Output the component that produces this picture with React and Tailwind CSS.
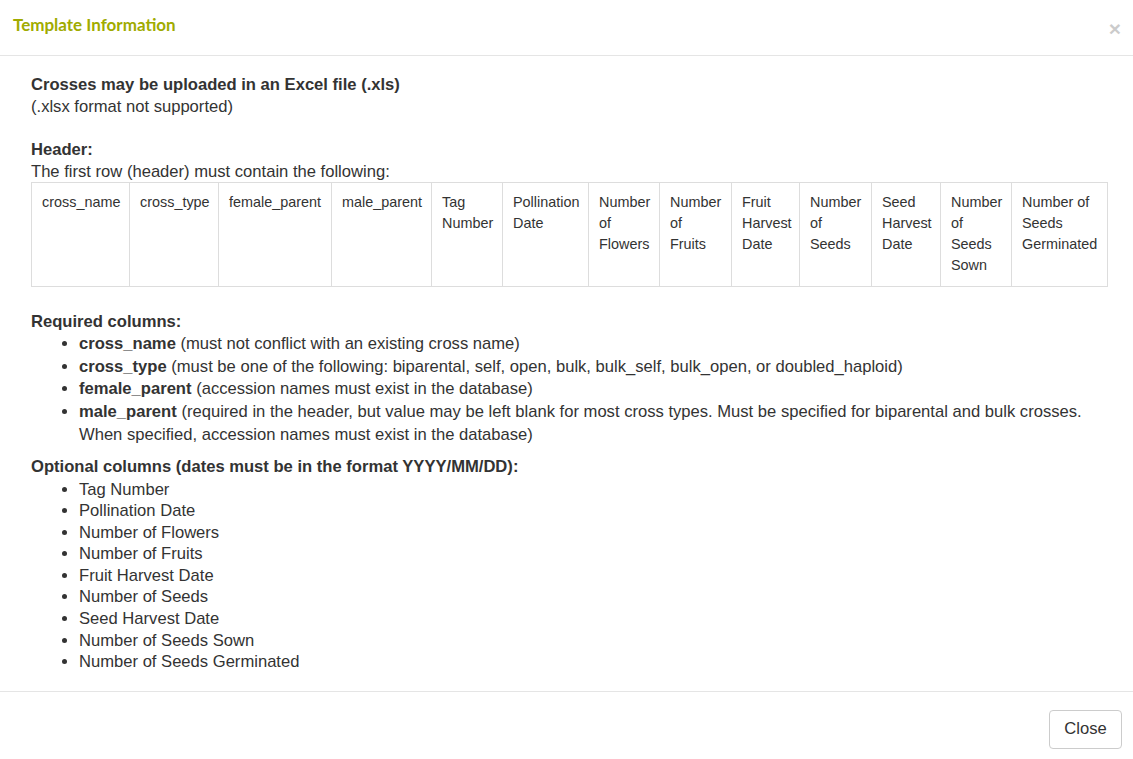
import React from "react";

const columns = [
  ["cross_name", "w-[98px]"],
  ["cross_type", "w-[89px]"],
  ["female_parent", "w-[113px]"],
  ["male_parent", "w-[100px]"],
  ["Tag Number", "w-[71px]"],
  ["Pollination Date", "w-[86px]"],
  ["Number of Flowers", "w-[71px]"],
  ["Number of Fruits", "w-[72px]"],
  ["Fruit Harvest Date", "w-[68px]"],
  ["Number of Seeds", "w-[72px]"],
  ["Seed Harvest Date", "w-[69px]"],
  ["Number of Seeds Sown", "w-[71px]"],
  ["Number of Seeds Germinated", "w-[96px]"],
];

const required = [
  ["cross_name", "(must not conflict with an existing cross name)"],
  [
    "cross_type",
    "(must be one of the following: biparental, self, open, bulk, bulk_self, bulk_open, or doubled_haploid)",
  ],
  ["female_parent", "(accession names must exist in the database)"],
  [
    "male_parent",
    "(required in the header, but value may be left blank for most cross types. Must be specified for biparental and bulk crosses. When specified, accession names must exist in the database)",
  ],
];

const optional = [
  "Tag Number",
  "Pollination Date",
  "Number of Flowers",
  "Number of Fruits",
  "Fruit Harvest Date",
  "Number of Seeds",
  "Seed Harvest Date",
  "Number of Seeds Sown",
  "Number of Seeds Germinated",
];

export default function App() {
  return (
    <div className="min-h-[759px] w-[1133px] bg-white text-[#333] font-['Liberation_Sans',Arial,sans-serif] flex flex-col">
      {/* header */}
      <div className="flex h-[56px] items-center justify-between border-b border-[#e5e5e5] pl-[13px] pr-[12px]">
        <h4 className="font-['Lato',sans-serif] text-[17px] font-bold text-[#a0ab00] leading-[22px] -mt-[6px]">
          Template Information
        </h4>
        <button className="text-[21px] font-bold leading-none text-black opacity-20 mt-[2px]">×</button>
      </div>

      {/* body */}
      <div className="flex-1 pl-[31px] pr-[26px] pt-[18px] pb-[18px] text-[16.6px]">
        <div className="leading-[22px]">
          <b>Crosses may be uploaded in an Excel file (.xls)</b>
          <br />
          (.xlsx format not supported)
        </div>

        <div className="mt-[21px] leading-[22px]">
          <b>Header:</b>
          <br />
          The first row (header) must contain the following:
        </div>

        <table className="w-[1076px] table-fixed border-collapse text-[14.4px] leading-[21px] -mt-[1px]">
          <tbody>
            <tr>
              {columns.map(([name, w]) => (
                <td
                  key={name}
                  className={`${w} h-[104px] border border-[#ddd] px-[10px] pt-[9px] pb-[10px] align-top`}
                >
                  {name}
                </td>
              ))}
            </tr>
          </tbody>
        </table>

        <div className="mt-[24px] leading-[22px] font-bold">Required columns:</div>
        <ul className="list-disc pl-[48px] leading-[22.7px]">
          {required.map(([k, v]) => (
            <li key={k}>
              <b>{k}</b> {v}
            </li>
          ))}
        </ul>

        <div className="mt-[9px] leading-[22px] font-bold">
          Optional columns (dates must be in the format YYYY/MM/DD):
        </div>
        <ul className="list-disc pl-[48px] leading-[21.6px] mt-[1px]">
          {optional.map((o) => (
            <li key={o}>{o}</li>
          ))}
        </ul>
      </div>

      {/* footer */}
      <div className="flex justify-end border-t border-[#e5e5e5] pt-[18px] pb-[10px] pr-[11px]">
        <button className="h-[39px] w-[73px] rounded-[4px] border border-[#ccc] bg-white text-[16.6px] text-[#333]">
          Close
        </button>
      </div>
    </div>
  );
}
